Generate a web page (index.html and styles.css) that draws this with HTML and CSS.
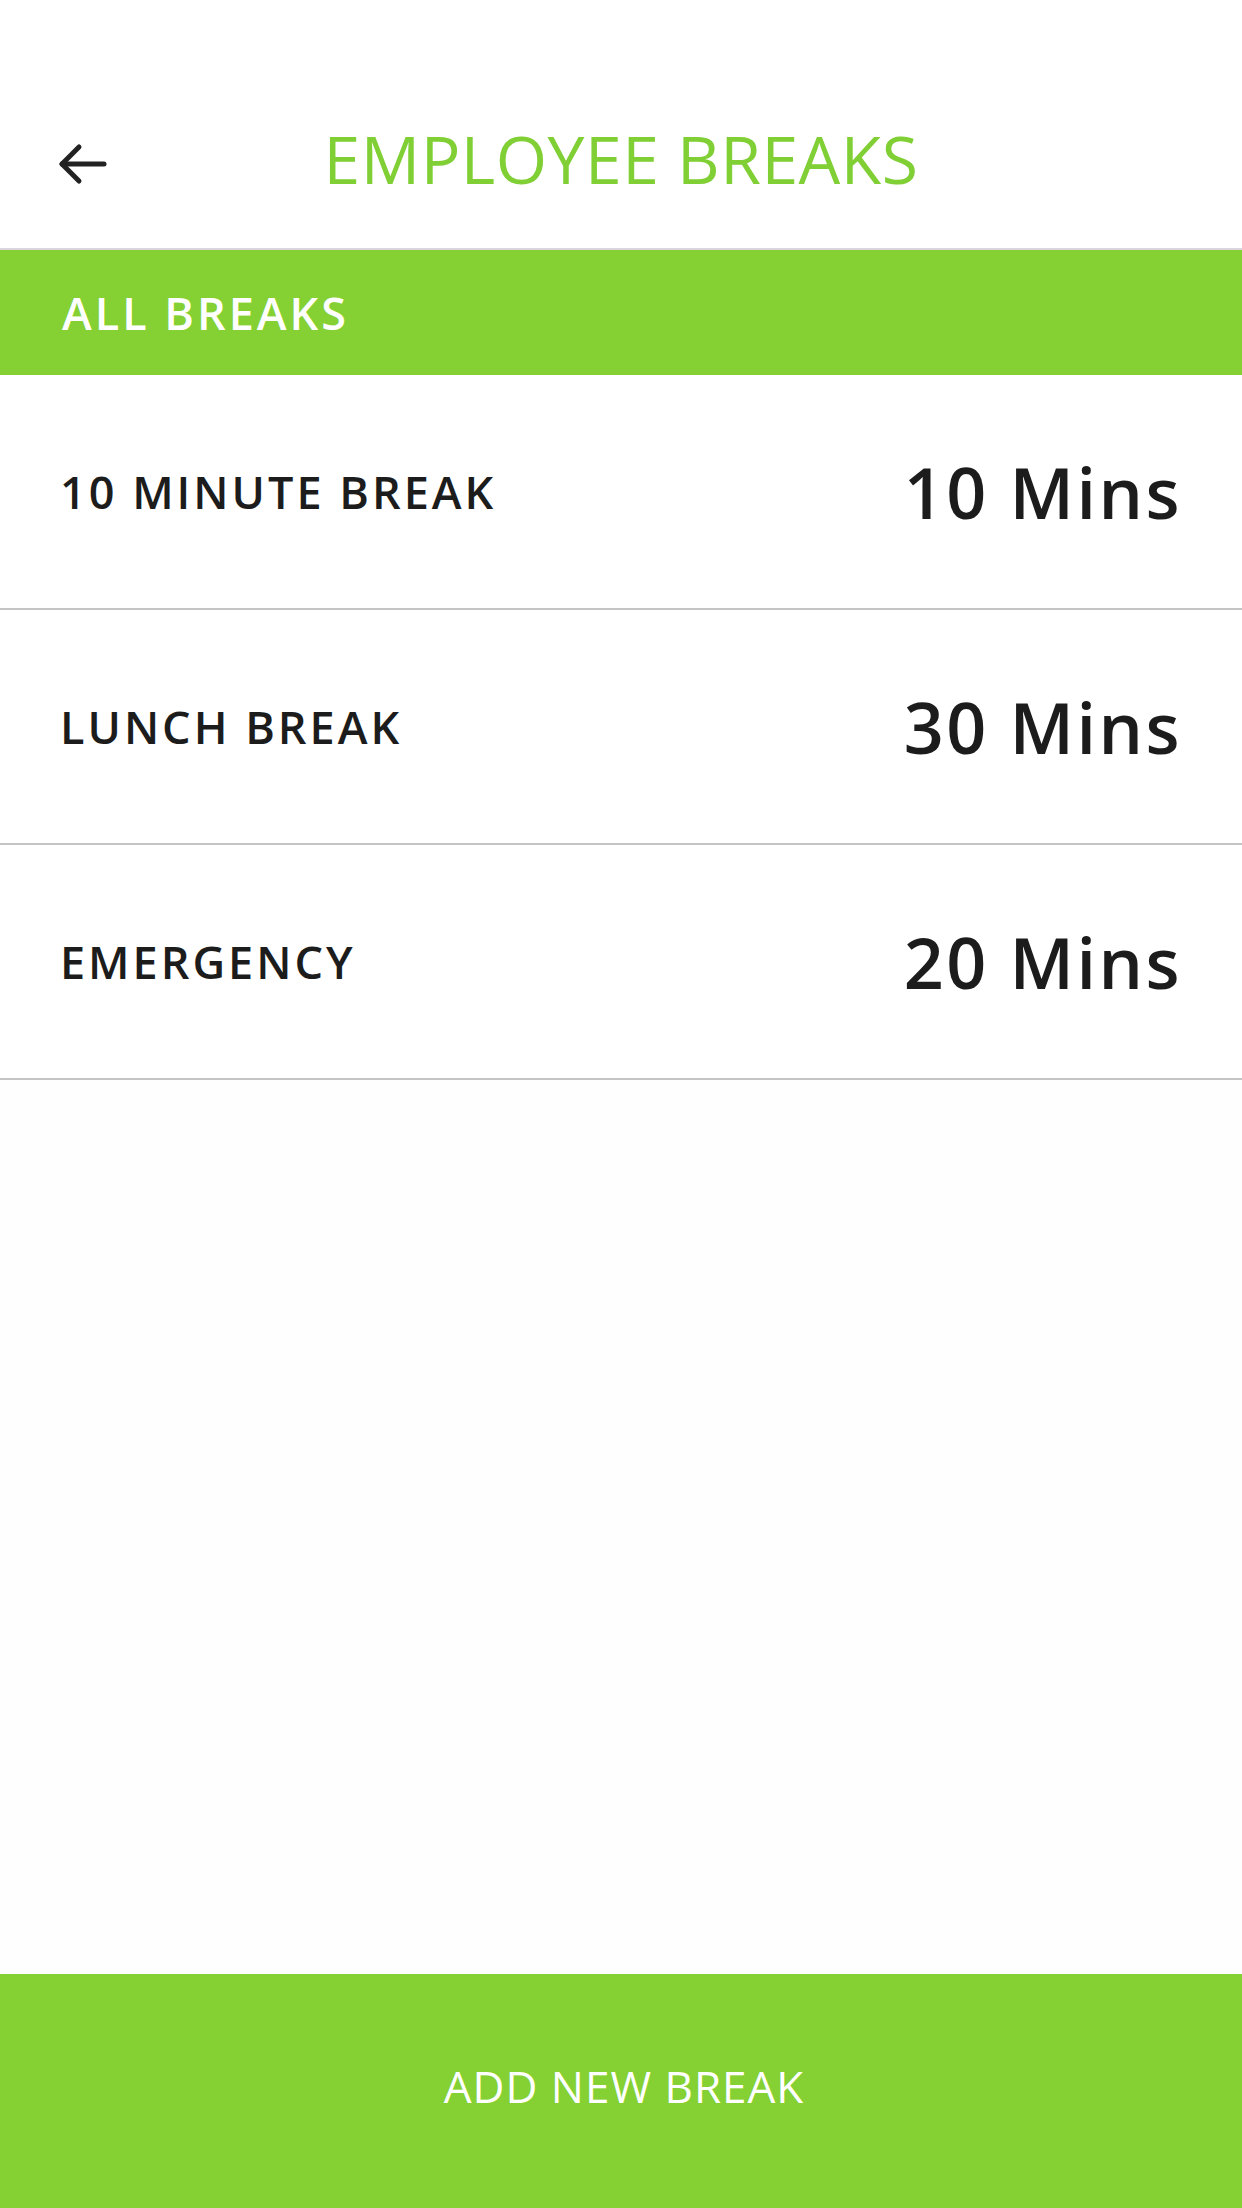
FILE: index.html
```html
<!DOCTYPE html>
<html>
<head>
<meta charset="utf-8">
<link rel="stylesheet" href="styles.css">
</head>
<body>
<div class="screen">
  <header class="topbar">
    <div class="back">
      <svg width="50" height="42" viewBox="0 0 50 42" fill="none" stroke="#222" stroke-width="5" stroke-linecap="round" stroke-linejoin="round">
        <path d="M47 21H5"/>
        <path d="M22 4L5 21L22 38"/>
      </svg>
    </div>
    <h1 class="title">EMPLOYEE BREAKS</h1>
    <div></div>
  </header>
  <div class="section">ALL BREAKS</div>
  <ul class="list">
    <li class="row"><span class="label">10 MINUTE BREAK</span><span class="value">10 Mins</span></li>
    <li class="row"><span class="label">LUNCH BREAK</span><span class="value">30 Mins</span></li>
    <li class="row"><span class="label">EMERGENCY</span><span class="value">20 Mins</span></li>
  </ul>
  <div class="spacer"></div>
  <button class="add">ADD NEW BREAK</button>
</div>
</body>
</html>
```

FILE: styles.css
```css
html, body {
  margin: 0;
  padding: 0;
  background: #ffffff;
}
.screen {
  width: 1242px;
  height: 2208px;
  display: flex;
  flex-direction: column;
  font-family: "Open Sans", "Liberation Sans", sans-serif;
  background: #fefefe;
}
.topbar {
  height: 250px;
  box-sizing: border-box;
  padding-top: 68px;
  display: grid;
  grid-template-columns: 1fr auto 1fr;
  align-items: center;
  background: #ffffff;
  border-bottom: 2px solid #d9d4de;
}
.back {
  padding-left: 57px;
  padding-top: 12px;
  display: flex;
  align-items: center;
}
.back svg { display: block; }
.title {
  margin: 0;
  font-size: 66px;
  line-height: 1;
  font-weight: 400;
  color: #7fcf35;
  letter-spacing: 0.5px;
}
.section {
  height: 125px;
  box-sizing: border-box;
  padding-left: 62px;
  display: flex;
  align-items: center;
  background: #85d133;
  color: #ffffff;
  font-size: 45px;
  font-weight: 600;
  letter-spacing: 3px;
}
.list {
  list-style: none;
  margin: 0;
  padding: 0;
  background: #ffffff;
}
.row {
  height: 235px;
  box-sizing: border-box;
  padding: 0 60px 0 60px;
  display: flex;
  justify-content: space-between;
  align-items: center;
  border-bottom: 2px solid #c4c4c4;
  color: #1c1c1c;
}
.label {
  font-size: 45px;
  font-weight: 600;
  letter-spacing: 3px;
}
.value {
  font-size: 70px;
  font-weight: 600;
  letter-spacing: 2.5px;
}
.spacer {
  flex: 1;
}
.add {
  height: 234px;
  border: 0;
  margin: 0;
  padding: 0 0 10px 6px;
  background: #85d133;
  color: #ffffff;
  font-family: "Open Sans", "Liberation Sans", sans-serif;
  font-size: 44px;
  font-weight: 400;
  letter-spacing: 1px;
}
```
